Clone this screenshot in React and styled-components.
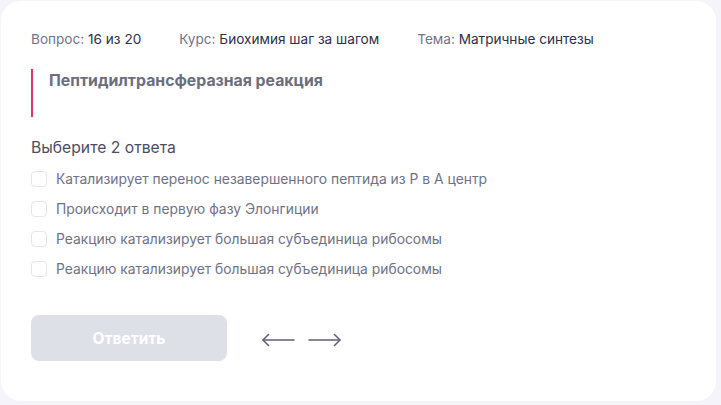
import React from "react";
import styled, { createGlobalStyle } from "styled-components";

const Global = createGlobalStyle`
  html, body { margin: 0; padding: 0; background: #f4f4fa; }
  body { font-family: Inter, "Noto Sans", sans-serif; -webkit-font-smoothing: antialiased; }
  * { box-sizing: border-box; }
`;

const Page = styled.div`
  width: 721px;
  height: 405px;
  padding: 1px 5px 4px 1px;
`;

const Card = styled.div`
  width: 715px;
  height: 400px;
  background: #ffffff;
  border-radius: 20px;
  padding: 29px 30px 0 30px;
  display: flex;
  flex-direction: column;
`;

const Meta = styled.div`
  display: flex;
  gap: 38px;
  font-size: 13.6px;
  line-height: 18px;
`;

const MetaItem = styled.span`
  color: #70738a;
  white-space: nowrap;
`;

const MetaValue = styled.span`
  color: #2d3049;
`;

const Question = styled.div`
  margin-top: 21px;
  height: 48px;
  border-left: 2px solid #e0346a;
  padding: 3px 0 0 16px;
  font-size: 15.8px;
  line-height: 18px;
  font-weight: 700;
  color: #6c6e7e;
`;

const Hint = styled.div`
  margin-top: 21px;
  font-size: 15.7px;
  line-height: 20px;
  color: #4b4e63;
`;

const Options = styled.div`
  margin-top: 12px;
  display: flex;
  flex-direction: column;
  gap: 12px;
`;

const Option = styled.label`
  display: flex;
  align-items: center;
  gap: 9px;
  height: 18px;
  font-size: 13.85px;
  color: #6f7285;
  cursor: pointer;
`;

const Box = styled.span`
  width: 16px;
  height: 16px;
  border: 1px solid #e4e6ec;
  border-radius: 4px;
  background: #fff;
  flex: none;
`;

const Footer = styled.div`
  margin-top: 37px;
  display: flex;
  align-items: center;
  gap: 34px;
`;

const Button = styled.button`
  width: 196px;
  height: 46px;
  border: none;
  border-radius: 8px;
  background: #dde1e7;
  color: #ffffff;
  font-family: inherit;
  font-size: 15.5px;
  font-weight: 700;
`;

const Arrows = styled.div`
  display: flex;
  gap: 13px;
  align-items: center;
  padding-top: 3px;
`;

const Arrow = ({ dir }) => (
  <svg width="34" height="18" viewBox="0 0 34 18" fill="none" stroke="#5d6079" strokeWidth="1.5" strokeLinecap="round" strokeLinejoin="round">
    {dir === "left" ? (
      <>
        <path d="M2 9H33" />
        <path d="M7.5 3.5L2 9L7.5 14.5" />
      </>
    ) : (
      <>
        <path d="M1 9H32" />
        <path d="M26.5 3.5L32 9L26.5 14.5" />
      </>
    )}
  </svg>
);

const options = [
  "Катализирует перенос незавершенного пептида из Р в А центр",
  "Происходит в первую фазу Элонгиции",
  "Реакцию катализирует большая субъединица рибосомы",
  "Реакцию катализирует большая субъединица рибосомы",
];

export default function App() {
  return (
    <>
      <Global />
      <Page>
        <Card>
          <Meta>
            <MetaItem>Вопрос: <MetaValue>16 из 20</MetaValue></MetaItem>
            <MetaItem>Курс: <MetaValue>Биохимия шаг за шагом</MetaValue></MetaItem>
            <MetaItem>Тема: <MetaValue>Матричные синтезы</MetaValue></MetaItem>
          </Meta>
          <Question>Пептидилтрансферазная реакция</Question>
          <Hint>Выберите 2 ответа</Hint>
          <Options>
            {options.map((o, i) => (
              <Option key={i}>
                <Box />
                {o}
              </Option>
            ))}
          </Options>
          <Footer>
            <Button>Ответить</Button>
            <Arrows>
              <Arrow dir="left" />
              <Arrow dir="right" />
            </Arrows>
          </Footer>
        </Card>
      </Page>
    </>
  );
}
